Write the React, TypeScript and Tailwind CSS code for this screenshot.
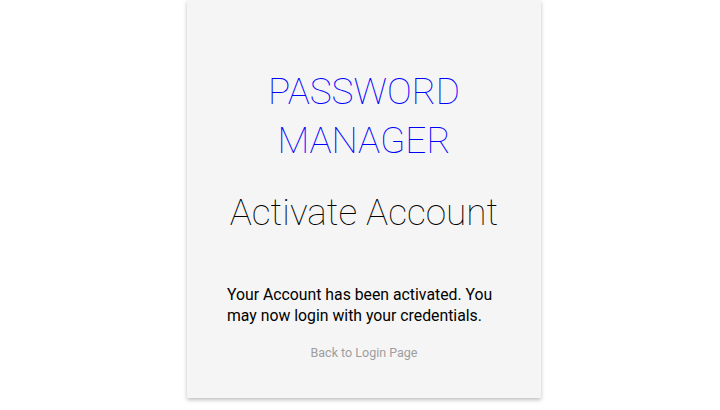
import React from "react";

const App: React.FC = () => {
  return (
    <div className="flex h-[410px] w-[720px] justify-center bg-white pl-[8px] font-['Roboto',sans-serif]">
      {/* card */}
      <div className="h-[398px] w-[354px] bg-[#f5f5f5] px-[40px] pt-[67px] text-center shadow-[0_2px_4px_rgba(0,0,0,0.25)]">
        <h1 className="text-[37px] leading-[49px] font-thin text-[#0000ff]">PASSWORD MANAGER</h1>
        <h2 className="mt-[23px] text-[37px] leading-[49px] font-thin whitespace-nowrap text-black">Activate Account</h2>
        <p className="mt-[47px] text-left text-[15.8px] leading-[21px] text-black">
          Your Account has been activated. You may now login with your credentials.
        </p>
        <a className="mt-[18px] block text-[12.5px] text-[#9e9e9e]">Back to Login Page</a>
      </div>
    </div>
  );
};

export default App;
